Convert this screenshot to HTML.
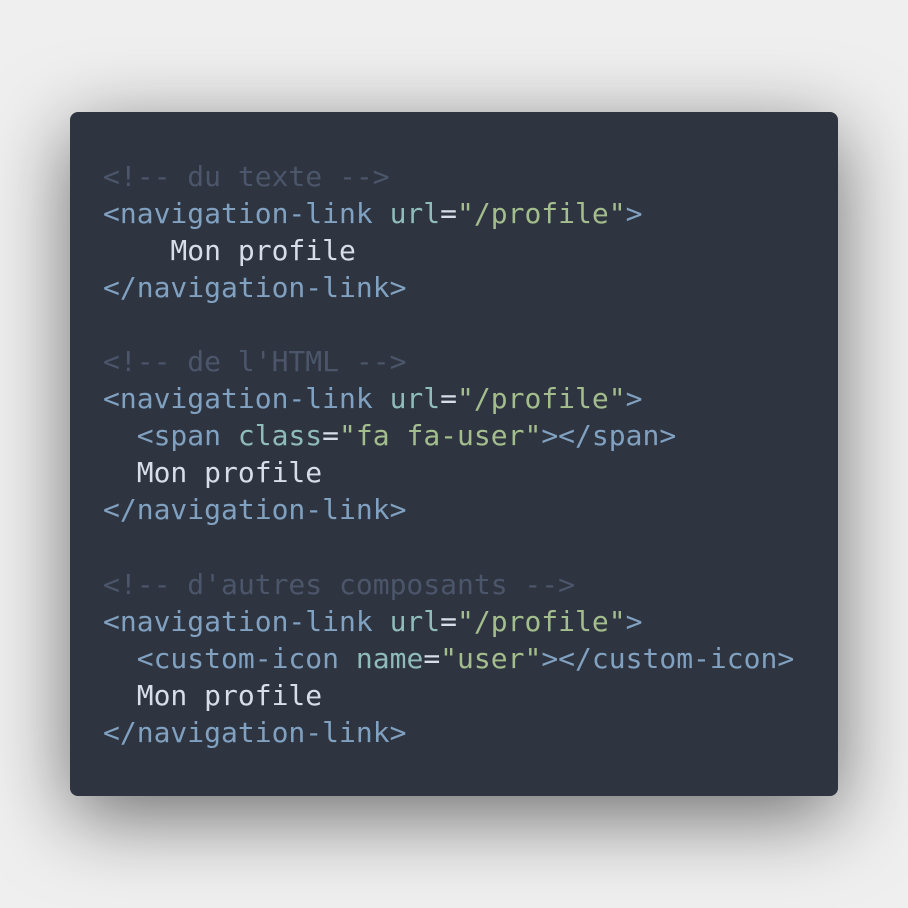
<!DOCTYPE html>
<html><head><meta charset="utf-8"><style>
html,body{margin:0;padding:0;}
body{width:908px;height:908px;background:#efefef;position:relative;overflow:hidden;}
.card{position:absolute;left:70px;top:112px;width:768px;height:684px;background:#2e3440;border-radius:8px;box-shadow:0 20px 80px rgba(0,0,0,0.55);}
pre{margin:0;position:absolute;left:33px;top:45.5px;font-family:"DejaVu Sans Mono","Liberation Mono",monospace;font-size:28px;line-height:37.1px;color:#d8dee9;}
.c{color:#4c566a}.t{color:#81a1c1}.a{color:#8fbcbb}.s{color:#a3be8c}
</style></head><body><div class="card"><pre><span class="c">&lt;!-- du texte --&gt;</span>
<span class="t">&lt;navigation-link</span> <span class="a">url</span>=<span class="s">"/profile"</span><span class="t">&gt;</span>
    Mon profile
<span class="t">&lt;/navigation-link&gt;</span>

<span class="c">&lt;!-- de l'HTML --&gt;</span>
<span class="t">&lt;navigation-link</span> <span class="a">url</span>=<span class="s">"/profile"</span><span class="t">&gt;</span>
  <span class="t">&lt;span</span> <span class="a">class</span>=<span class="s">"fa fa-user"</span><span class="t">&gt;&lt;/span&gt;</span>
  Mon profile
<span class="t">&lt;/navigation-link&gt;</span>

<span class="c">&lt;!-- d'autres composants --&gt;</span>
<span class="t">&lt;navigation-link</span> <span class="a">url</span>=<span class="s">"/profile"</span><span class="t">&gt;</span>
  <span class="t">&lt;custom-icon</span> <span class="a">name</span>=<span class="s">"user"</span><span class="t">&gt;&lt;/custom-icon&gt;</span>
  Mon profile
<span class="t">&lt;/navigation-link&gt;</span></pre></div></body></html>
